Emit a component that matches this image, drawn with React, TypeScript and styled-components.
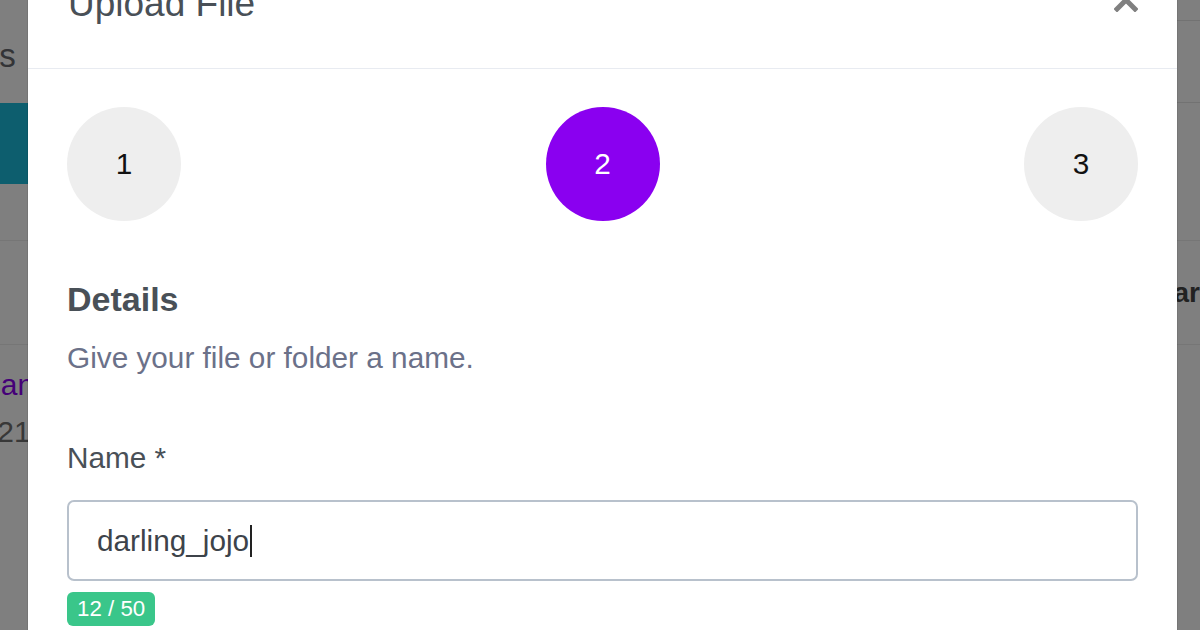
import styled, { createGlobalStyle } from "styled-components";

const GlobalStyle = createGlobalStyle`
  html, body {
    margin: 0;
    padding: 0;
  }
  body {
    font-family: "Liberation Sans", Arial, sans-serif;
    overflow: hidden;
  }
`;

// ---- page behind the modal ----

const Page = styled.div`
  position: relative;
  width: 1200px;
  height: 630px;
  overflow: hidden;
  background: #ffffff;
`;

const PageInner = styled.div`
  margin-left: -54px;
  margin-right: -40px;
`;

const TopBar = styled.div`
  display: flex;
  justify-content: space-between;
  align-items: flex-start;
  height: 103px;
  padding-top: 20px;
  box-sizing: border-box;
`;

const PageTitle = styled.h1`
  margin: 16px 0 0;
  font-size: 33px;
  line-height: 40px;
  font-weight: 400;
  color: #66696e;
`;

const SearchBox = styled.div`
  width: 160px;
  height: 83px;
  box-sizing: border-box;
  border: 1px solid #e4e4e4;
  border-right: none;
`;

const Toolbar = styled.div`
  display: flex;
  height: 81px;
`;

const PrimaryButton = styled.div`
  width: 200px;
  height: 81px;
  background: #1abcdc;
`;

const Table = styled.div`
  margin-top: 56px;
`;

const HeaderRow = styled.div`
  display: flex;
  justify-content: space-between;
  align-items: center;
  height: 105px;
  box-sizing: border-box;
  border-top: 1px solid #ececec;
  border-bottom: 1px solid #ececec;
  padding: 0 40px 0 110px;
`;

const HeaderCell = styled.span`
  font-size: 28px;
  line-height: 34px;
  font-weight: 700;
  color: #444;
`;

const BodyRow = styled.div`
  display: flex;
  flex-direction: column;
  padding: 16px 40px 0 18px;
`;

const FileLink = styled.span`
  font-size: 30px;
  line-height: 47px;
  color: #8a00f0;
`;

const FileDate = styled.span`
  font-size: 30px;
  line-height: 47px;
  color: #707070;
`;

// ---- modal ----

const Overlay = styled.div`
  position: absolute;
  inset: 0;
  background: rgba(0, 0, 0, 0.5);
  overflow: hidden;
`;

const Modal = styled.div`
  margin: -60px 0 0 28px;
  width: 1149px;
  background: #ffffff;
  box-shadow: 0 0 0 1px rgba(0, 0, 0, 0.08);
`;

const ModalHeader = styled.div`
  display: flex;
  justify-content: space-between;
  align-items: flex-start;
  padding: 40px 39px 40px 40px;
  border-bottom: 1px solid #e8ebf1;
`;

const ModalTitle = styled.h2`
  margin: 0;
  font-size: 37px;
  line-height: 48px;
  font-weight: 400;
  color: #495057;
`;

const CloseButton = styled.button`
  margin-top: 8px;
  padding: 0;
  width: 24px;
  height: 24px;
  border: none;
  background: none;
  display: flex;
  cursor: pointer;
`;

const ModalBody = styled.div`
  padding: 38px 39px 40px 39px;
`;

const Steps = styled.div`
  display: flex;
  justify-content: space-between;
`;

const StepCircle = styled.div<{ $active?: boolean }>`
  width: 114px;
  height: 114px;
  border-radius: 50%;
  display: flex;
  align-items: center;
  justify-content: center;
  font-size: 29.75px;
  background: ${(p) => (p.$active ? "#8a00f0" : "#eeeeee")};
  color: ${(p) => (p.$active ? "#ffffff" : "#111111")};
`;

const SectionTitle = styled.h3`
  margin: 58px 0 0;
  font-size: 34px;
  line-height: 40px;
  font-weight: 700;
  color: #495057;
`;

const SectionText = styled.p`
  margin: 21px 0 0;
  font-size: 29.75px;
  line-height: 36px;
  color: #6b7189;
`;

const FieldLabel = styled.label`
  display: block;
  margin-top: 64px;
  font-size: 29.75px;
  line-height: 36px;
  color: #495057;
`;

const TextInput = styled.div`
  margin-top: 24px;
  height: 81px;
  box-sizing: border-box;
  border: 2px solid #b8c1cc;
  border-radius: 7px;
  padding: 0 28px;
  display: flex;
  align-items: center;
  font-size: 29.75px;
  color: #3d434a;
`;

const Caret = styled.span`
  display: inline-block;
  width: 2px;
  height: 32px;
  margin-left: 1px;
  background: #222;
`;

const Counter = styled.span`
  display: inline-block;
  margin-top: 11px;
  height: 34px;
  padding: 0 10px;
  border-radius: 6px;
  background: #3ac68a;
  color: #ffffff;
  font-size: 22.3px;
  line-height: 34px;
`;

const steps = [1, 2, 3];
const activeStep = 2;
const fileName = "darling_jojo";
const maxLength = 50;

export default function App() {
  return (
    <>
      <GlobalStyle />
      <Page>
        <PageInner>
          <TopBar>
            <PageTitle>Files</PageTitle>
            <SearchBox />
          </TopBar>
          <Toolbar>
            <PrimaryButton />
          </Toolbar>
          <Table>
            <HeaderRow>
              <HeaderCell>Name</HeaderCell>
              <HeaderCell>Year</HeaderCell>
            </HeaderRow>
            <BodyRow>
              <FileLink>Spanish notes</FileLink>
              <FileDate>2021</FileDate>
            </BodyRow>
          </Table>
        </PageInner>

        <Overlay>
          <Modal>
            <ModalHeader>
              <ModalTitle>Upload File</ModalTitle>
              <CloseButton aria-label="Close">
                <svg width="24" height="24" viewBox="0 0 24 24">
                  <path
                    d="M3 3 L21 21 M21 3 L3 21"
                    stroke="#808080"
                    strokeWidth="5"
                    strokeLinecap="square"
                    fill="none"
                  />
                </svg>
              </CloseButton>
            </ModalHeader>
            <ModalBody>
              <Steps>
                {steps.map((s) => (
                  <StepCircle key={s} $active={s === activeStep}>
                    {s}
                  </StepCircle>
                ))}
              </Steps>
              <SectionTitle>Details</SectionTitle>
              <SectionText>Give your file or folder a name.</SectionText>
              <FieldLabel>Name *</FieldLabel>
              <TextInput>
                {fileName}
                <Caret />
              </TextInput>
              <Counter>
                {fileName.length} / {maxLength}
              </Counter>
            </ModalBody>
          </Modal>
        </Overlay>
      </Page>
    </>
  );
}
